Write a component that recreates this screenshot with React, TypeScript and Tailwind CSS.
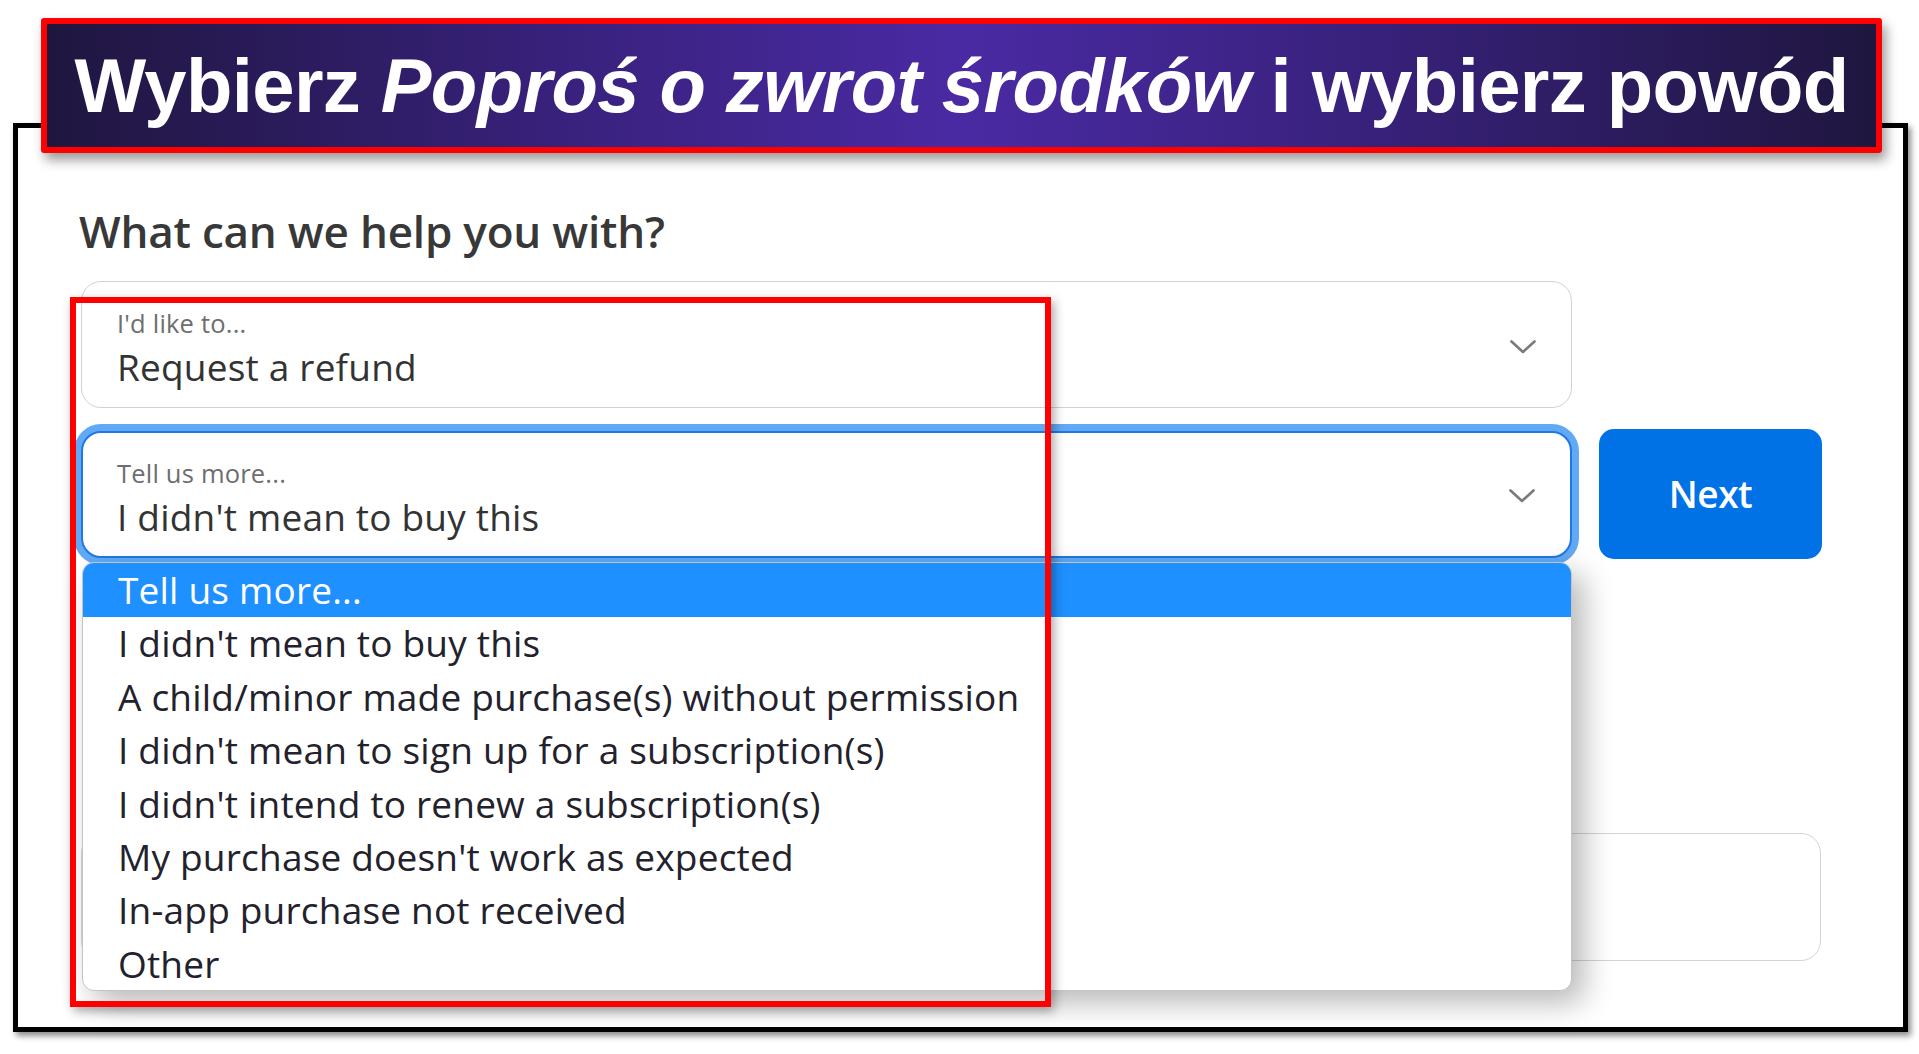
import React from "react";

const Chevron = () => (
  <svg width="26" height="14" viewBox="0 0 26 14" className="shrink-0 mt-[4px]">
    <path d="M1.5 1.5 L13 12 L24.5 1.5" fill="none" stroke="#7a7a7a" strokeWidth="2.6" strokeLinecap="round" strokeLinejoin="round" />
  </svg>
);

const options = [
  "I didn't mean to buy this",
  "A child/minor made purchase(s) without permission",
  "I didn't mean to sign up for a subscription(s)",
  "I didn't intend to renew a subscription(s)",
  "My purchase doesn't work as expected",
  "In-app purchase not received",
  "Other",
];

export default function App() {
  const ui = { fontFamily: '"Open Sans", "Noto Sans", sans-serif' };
  return (
    <div className="relative w-[1919px] h-[1054px] bg-white overflow-hidden" style={ui}>
      {/* main frame */}
      <div className="ml-[13px] mt-[123px] w-[1895px] h-[909px] border-[5px] border-black bg-white shadow-[3px_4px_6px_rgba(0,0,0,0.45)]">
        <div className="pl-[63px] pt-[75px] flex flex-col">
          <h1 className="text-[44px] leading-[56px] font-semibold text-[#383838] tracking-[-0.2px] -ml-[2px]">
            What can we help you with?
          </h1>

          {/* select 1 */}
          <div className="mt-[22px] w-[1491px] h-[127px] rounded-[20px] border border-[#d2d2d2] bg-white flex items-center pr-[35px]">
            <div className="flex-1 self-stretch pl-[35px] pt-[26px] flex flex-col">
              <span className="text-[25.5px] leading-[30px] text-[#6e6e6e] tracking-[0.2px]">I'd like to...</span>
              <span className="mt-[5px] text-[37px] leading-[48px] text-[#333] tracking-[0.2px]">Request a refund</span>
            </div>
            <Chevron />
          </div>

          {/* select 2 + button */}
          <div className="mt-[21px] flex items-center">
            <div className="relative w-[1491px]">
              <div className="h-[127px] rounded-[20px] border-2 border-[#1f78e6] bg-white shadow-[0_0_0_7px_#62a9f5] flex items-center pr-[35px]">
                <div className="flex-1 self-stretch pl-[34px] pt-[25px] flex flex-col">
                  <span className="text-[25.5px] leading-[30px] text-[#6e6e6e] tracking-[0.2px]">Tell us more...</span>
                  <span className="mt-[5px] text-[37px] leading-[48px] text-[#333] tracking-[0.2px]">I didn't mean to buy this</span>
                </div>
                <Chevron />
              </div>

              {/* dropdown list */}
              <div className="absolute left-[1px] right-0 top-[131px] z-10 rounded-[12px] overflow-hidden bg-white border border-[#c4c4c4] shadow-[12px_12px_30px_rgba(0,0,0,0.28)]">
                <div className="h-[54px] bg-[#1e90ff] flex items-center pl-[35px] text-[37px] text-white tracking-[0.2px]">
                  Tell us more...
                </div>
                {options.map((o) => (
                  <div key={o} className="h-[53.4px] flex items-center pl-[35px] text-[37px] text-[#22212c] tracking-[0.2px]">
                    {o}
                  </div>
                ))}
              </div>
            </div>
            <button className="ml-[27px] w-[223px] h-[130px] rounded-[15px] bg-[#0072e5] text-white text-[37px] font-semibold tracking-[-0.5px]">
              Next
            </button>
          </div>

          {/* underlying text box */}
          <div className="mt-[274px] w-[1740px] h-[128px] rounded-[20px] border border-[#d4d4d4] bg-white" />
        </div>
      </div>

      {/* banner annotation */}
      <div className="absolute left-[41px] top-[18px] w-[1841px] h-[135px] border-[6px] border-[#ff0000] rounded-[3px] bg-[linear-gradient(90deg,#1f163f_0%,#3a2280_30%,#4a2aa3_50%,#3a2280_70%,#1f163f_100%)] shadow-[4px_7px_12px_rgba(0,0,0,0.4)] flex items-center justify-center">
        <span className="text-white font-bold text-[76px] leading-none tracking-[-0.6px]" style={{ fontFamily: '"Liberation Sans", Arial, sans-serif' }}>
          Wybierz <i>Poproś o zwrot środków</i> i wybierz powód
        </span>
      </div>

      {/* red highlight box */}
      <div className="absolute left-[70px] top-[297px] w-[981px] h-[710px] border-[6px] border-[#ff0000] shadow-[3px_4px_10px_rgba(0,0,0,0.35)] z-20" />
    </div>
  );
}
